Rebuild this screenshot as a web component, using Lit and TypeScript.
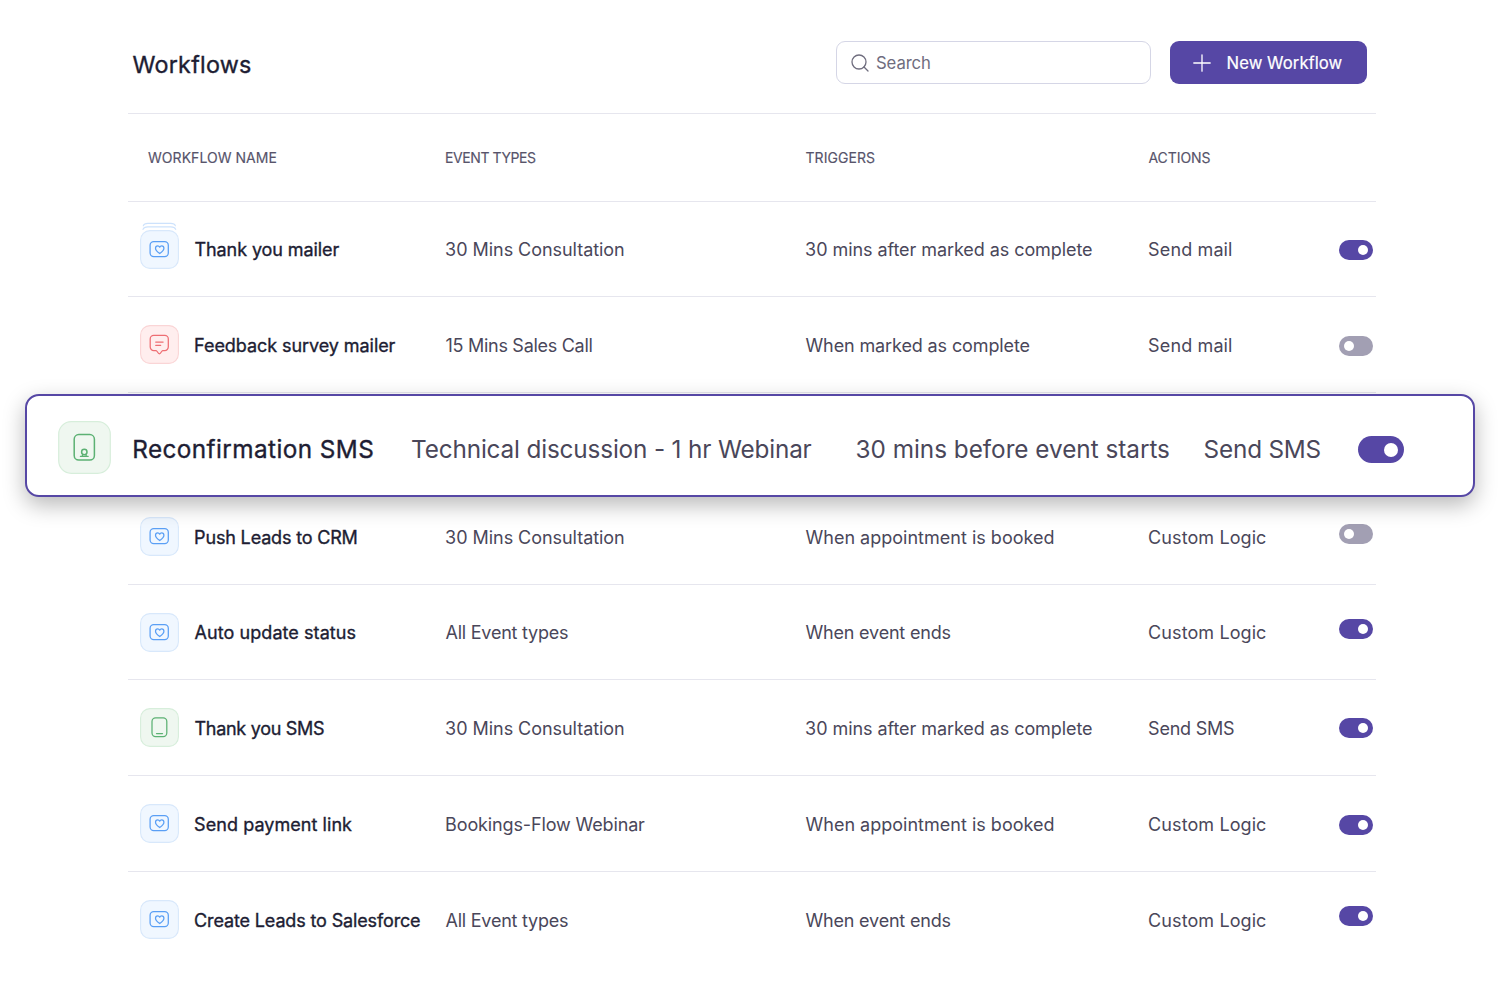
import { LitElement, html, svg, css, nothing } from "lit";
import { customElement, property } from "lit/decorators.js";
import { styleMap } from "lit/directives/style-map.js";

const FAMILY = `Inter, "Noto Sans", sans-serif`;
const pen = document.createElement("canvas").getContext("2d")!;

/** Tracks a label so that its glyphs span exactly the given width. */
function label(text: string, width: number, size: number, kind = "") {
  pen.font = `400 ${size}px ${FAMILY}`;
  const m = pen.measureText(text);
  const ink = m.actualBoundingBoxRight + m.actualBoundingBoxLeft;
  const spacing = (width - ink) / (text.length - 1);
  return html`<span
    class="label ${kind}"
    style=${styleMap({
      fontSize: `${size}px`,
      letterSpacing: `${spacing.toFixed(3)}px`,
      marginLeft: `${(m.actualBoundingBoxLeft * 0.4).toFixed(2)}px`,
    })}
    >${text}</span
  >`;
}

const labelStyles = css`
  .label {
    display: block;
    white-space: nowrap;
    line-height: 1.2;
    font-kerning: normal;
  }
  .strong {
    color: #201d33;
    -webkit-text-stroke: 0.35px #201d33;
  }
`;

type IconKind = "mail" | "stack" | "feedback" | "sms" | "reconfirm";

@customElement("flow-icon")
class FlowIcon extends LitElement {
  @property() kind: IconKind = "mail";

  static styles = css`
    :host {
      display: block;
      flex: none;
    }
    svg {
      display: block;
      overflow: visible;
      fill: none;
      stroke-linecap: round;
      stroke-linejoin: round;
    }
    .small {
      width: 39px;
      height: 39px;
    }
    .large {
      width: 53px;
      height: 53px;
    }
    .blue {
      fill: #f0f7ff;
      stroke: #d8e8fb;
    }
    .red {
      fill: #ffeeee;
      stroke: #fad5d6;
    }
    .green {
      fill: #eff7f0;
      stroke: #d7eedb;
    }
    .blue-line {
      stroke: #5a9ff5;
    }
    .red-line {
      stroke: #ee6e73;
    }
    .green-line {
      stroke: #5cb173;
    }
  `;

  render() {
    if (this.kind === "reconfirm") {
      return html`<svg class="large" viewBox="0 0 53 53">
        <rect class="green" x=".7" y=".7" width="51.6" height="51.6" rx="12.5" stroke-width="1.2" />
        <g class="green-line" stroke-width="1.5">
          <rect x="16.2" y="13.6" width="20.2" height="25.4" rx="4.6" />
          <circle cx="26.3" cy="31" r="2.7" />
          <path d="M22.4 35.3h7.8M24.8 33.4l-.6 1.7M27.8 33.4l.6 1.7" stroke-width="1.3" />
        </g>
      </svg>`;
    }
    const tone = this.kind === "feedback" ? "red" : this.kind === "sms" ? "green" : "blue";
    const glyph = {
      blue: svg`<rect x="10.1" y="11.6" width="18.2" height="15" rx="3.6" />
        <path d="M19.7 23.5c-2.7-1.8-4.2-3.3-4.2-5.2 0-1.4 1-2.4 2.2-2.4.9 0 1.6.5 2 1.3.4-.8 1.1-1.3 2-1.3 1.2 0 2.2 1 2.2 2.4 0 1.9-1.5 3.4-4.2 5.2Z" />`,
      red: svg`<path d="M13.7 10.4h11.1a3.5 3.5 0 0 1 3.5 3.5v8.1a3.5 3.5 0 0 1-3.5 3.5h-2.2c-.9 0-1.6 3.3-3.2 3.3s-2.3-3.3-3.2-3.3h-2.5a3.5 3.5 0 0 1-3.5-3.5v-8.1a3.5 3.5 0 0 1 3.5-3.5Z" />
        <path d="M15.7 17h7.4M15.7 20.3h5" />`,
      green: svg`<rect x="12" y="9.9" width="14.8" height="18.7" rx="3.6" />
        <path d="M16.5 25.5h6" />`,
    }[tone];
    return html`<svg class="small" viewBox="0 0 39 39">
      ${this.kind === "stack"
        ? svg`<path class="blue-line" stroke-opacity=".3" stroke-width="1.1" d="M3.3-4.2c.6-1.8 2.400-2.400 4.600-2.400h22.900c2.200 0 4 .6 4.600 2.400M3-.6c.8-2 2.600-2.500 4.800-2.500h23.100c2.200 0 4 .5 4.800 2.500" />`
        : nothing}
      <rect class=${tone} x=".6" y=".6" width="37.8" height="37.8" rx="9.3" stroke-width="1.1" />
      <g class="${tone}-line" stroke-width="1.25">${glyph}</g>
    </svg>`;
  }
}

@customElement("flow-toggle")
class FlowToggle extends LitElement {
  @property({ type: Boolean, reflect: true }) on = false;
  @property({ type: Boolean, reflect: true }) large = false;

  static styles = css`
    :host {
      display: flex;
      box-sizing: border-box;
      align-items: center;
      flex: none;
      width: 34px;
      height: 20px;
      padding: 0 5px;
      border-radius: 10px;
      background: #a29fb3;
    }
    :host([on]) {
      background: #5647a5;
      justify-content: flex-end;
    }
    :host([large]) {
      width: 46px;
      height: 27px;
      padding: 0 6px;
      border-radius: 13.5px;
    }
    .knob {
      width: 10px;
      height: 10px;
      border-radius: 50%;
      background: #fff;
    }
    :host([large]) .knob {
      width: 14px;
      height: 14px;
    }
  `;

  render() {
    return html`<span class="knob"></span>`;
  }
}

type Cell = [string, number];
interface Flow {
  icon: IconKind;
  name: Cell;
  event: Cell;
  trigger: Cell;
  action: Cell;
  on: boolean;
  shift: number;
}

const FLOWS: (Flow | null)[] = [
  { icon: "stack", name: ["Thank you mailer", 145], event: ["30 Mins Consultation", 178], trigger: ["30 mins after marked as complete", 286], action: ["Send mail", 82], on: true, shift: 0.8 },
  { icon: "feedback", name: ["Feedback survey mailer", 200.5], event: ["15 Mins Sales Call", 146], trigger: ["When marked as complete", 224], action: ["Send mail", 82], on: false, shift: 1 },
  null,
  { icon: "mail", name: ["Push Leads to CRM", 161.5], event: ["30 Mins Consultation", 178], trigger: ["When appointment is booked", 248], action: ["Custom Logic", 117], on: false, shift: -2.4 },
  { icon: "mail", name: ["Auto update status", 161], event: ["All Event types", 122.5], trigger: ["When event ends", 145], action: ["Custom Logic", 117], on: true, shift: -3.4 },
  { icon: "sms", name: ["Thank you SMS", 129.5], event: ["30 Mins Consultation", 178], trigger: ["30 mins after marked as complete", 286], action: ["Send SMS", 85], on: true, shift: -0.1 },
  { icon: "mail", name: ["Send payment link", 157], event: ["Bookings-Flow Webinar", 199], trigger: ["When appointment is booked", 248], action: ["Custom Logic", 117], on: true, shift: 1.1 },
  { icon: "mail", name: ["Create Leads to Salesforce", 225], event: ["All Event types", 122.5], trigger: ["When event ends", 145], action: ["Custom Logic", 117], on: true, shift: -4.1 },
];

@customElement("app-root")
class AppRoot extends LitElement {
  static styles = [
    labelStyles,
    css`
      :host {
        display: block;
        position: relative;
        box-sizing: border-box;
        height: 995px;
        padding: 0 124px 0 128px;
        overflow: hidden;
        background: #fff;
        color: #4a475a;
        font-family: Inter, "Noto Sans", sans-serif;
      }
      .bar {
        display: flex;
        box-sizing: border-box;
        height: 114px;
        padding: 41px 9px 0 4.5px;
        border-bottom: 1px solid #e6e6ee;
      }
      .title {
        flex: 1;
        padding-top: 10px;
      }
      .search,
      .create {
        display: flex;
        align-items: center;
        box-sizing: border-box;
        height: 43px;
        border-radius: 9px;
      }
      .search {
        width: 315px;
        margin-right: 19px;
        padding-left: 14px;
        gap: 7px;
        border: 1.5px solid #d5d6e6;
        color: #6f6d7e;
      }
      .create {
        width: 197px;
        padding-left: 23px;
        gap: 16px;
        background: #5647a5;
        color: #fff;
      }
      .search .label,
      .create .label {
        padding-top: 2px;
      }
      .glyph {
        flex: none;
        fill: none;
        stroke: currentColor;
        stroke-linecap: round;
        stroke-width: 1.3;
      }
      .bright {
        -webkit-text-stroke: 0.2px #fff;
      }
      .grid {
        display: grid;
        grid-template-columns: 317.5px 360px 343px 190px auto;
        align-items: center;
        box-sizing: border-box;
        border-bottom: 1px solid #e6e6ee;
      }
      .head {
        height: 87.6px;
        color: #57546b;
      }
      .head .first {
        padding-left: 20px;
      }
      .head .label {
        padding-top: 2px;
        -webkit-text-stroke: 0.15px #57546b;
      }
      .row {
        height: 95.75px;
      }
      .row:last-child {
        border-bottom: 0;
      }
      .name {
        display: flex;
        align-items: center;
        gap: 15.5px;
        padding-left: 12px;
      }
      .name .label,
      .cell {
        padding-top: 2.6px;
      }
      .name flow-icon {
        margin-top: 0.5px;
      }
      .featured {
        position: absolute;
        top: 394px;
        left: 25px;
        display: flex;
        align-items: center;
        box-sizing: border-box;
        width: 1450px;
        height: 103px;
        padding: 8px 0 0 31px;
        border: 2px solid #5647a5;
        border-radius: 14px;
        background: #fff;
        box-shadow: 0 8px 22px rgba(0, 0, 0, 0.28);
      }
      .f-icon {
        margin-top: -4.5px;
        width: 75px;
      }
      .f-name {
        width: 278.5px;
      }
      .f-event {
        width: 444.5px;
      }
      .f-trigger {
        width: 348px;
      }
      .f-action {
        width: 154px;
      }
    `,
  ];

  private row(flow: Flow | null) {
    if (!flow) return html`<div class="grid row"></div>`;
    return html`<div class="grid row">
      <div class="name">
        <flow-icon kind=${flow.icon}></flow-icon>
        ${label(flow.name[0], flow.name[1], 18, "strong")}
      </div>
      <div class="cell">${label(flow.event[0], flow.event[1], 18)}</div>
      <div class="cell">${label(flow.trigger[0], flow.trigger[1], 18)}</div>
      <div class="cell">${label(flow.action[0], flow.action[1], 18)}</div>
      <flow-toggle ?on=${flow.on} style=${styleMap({ marginTop: `${flow.shift * 2}px` })}></flow-toggle>
    </div>`;
  }

  render() {
    return html`
      <header class="bar">
        <div class="title">${label("Workflows", 118.5, 23.3, "strong")}</div>
        <div class="search">
          <svg class="glyph" width="18" height="18" viewBox="0 0 18 18">
            <circle cx="8" cy="8" r="7" />
            <path d="M13 13l4 4" />
          </svg>
          ${label("Search", 54, 16.7)}
        </div>
        <div class="create">
          <svg class="glyph" width="18" height="18" viewBox="0 0 18 18">
            <path d="M9 .8v16.4M.8 9h16.4" />
          </svg>
          ${label("New Workflow", 115, 16.7, "bright")}
        </div>
      </header>
      <div class="grid head">
        <div class="first">${label("WORKFLOW NAME", 128.5, 14)}</div>
        ${label("EVENT TYPES", 90, 14)} ${label("TRIGGERS", 69.5, 14)} ${label("ACTIONS", 62, 14)}
      </div>
      <main>${FLOWS.map((f) => this.row(f))}</main>
      <section class="featured">
        <div class="f-icon"><flow-icon kind="reconfirm"></flow-icon></div>
        <div class="f-name">${label("Reconfirmation SMS", 239, 24.3, "strong")}</div>
        <div class="f-event">${label("Technical discussion - 1 hr Webinar", 399.5, 24.3)}</div>
        <div class="f-trigger">${label("30 mins before event starts", 312.5, 24.3)}</div>
        <div class="f-action">${label("Send SMS", 116, 24.3)}</div>
        <flow-toggle on large></flow-toggle>
      </section>
    `;
  }
}
